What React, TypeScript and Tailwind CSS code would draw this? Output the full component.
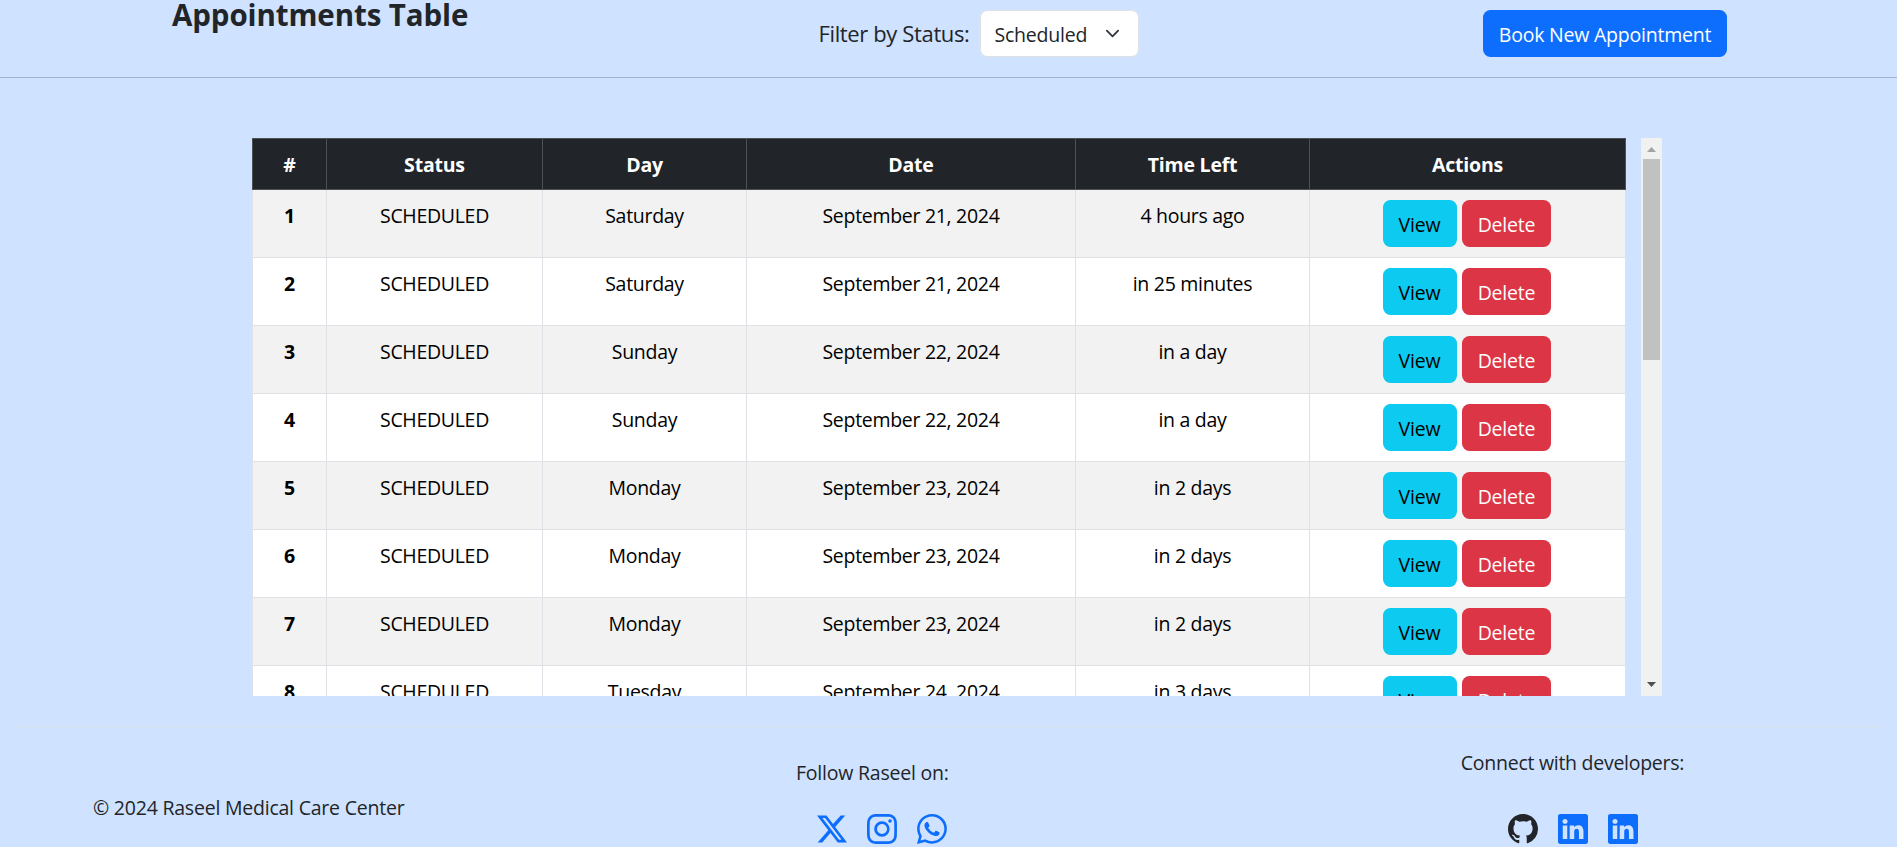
import type { ReactNode } from "react";
import { BsGithub, BsInstagram, BsLinkedin, BsTwitterX, BsWhatsapp } from "react-icons/bs";

type Appointment = { day: string; date: string; left: string };

const appointments: Appointment[] = [
  { day: "Saturday", date: "September 21, 2024", left: "4 hours ago" },
  { day: "Saturday", date: "September 21, 2024", left: "in 25 minutes" },
  { day: "Sunday", date: "September 22, 2024", left: "in a day" },
  { day: "Sunday", date: "September 22, 2024", left: "in a day" },
  { day: "Monday", date: "September 23, 2024", left: "in 2 days" },
  { day: "Monday", date: "September 23, 2024", left: "in 2 days" },
  { day: "Monday", date: "September 23, 2024", left: "in 2 days" },
  { day: "Tuesday", date: "September 24, 2024", left: "in 3 days" },
];

const headings = ["#", "Status", "Day", "Date", "Time Left", "Actions"];

function Header() {
  return (
    <header className="flex h-[78px] items-start justify-between border-b border-[#a0b0ce] pr-[170px] pl-[172px]">
      <h1 className="w-[300px] text-[29.5px] leading-[30px] font-bold tracking-[-0.1px] whitespace-nowrap">
        Appointments Table
      </h1>
      <div className="flex items-center pt-2.5 pl-0.5">
        <label className="text-[22px] leading-[33px] tracking-[-0.37px] whitespace-nowrap">
          Filter by Status:
        </label>
        <button className="ml-2.5 flex h-[47px] w-[159px] items-center rounded-[7.5px] border border-[#dee2e6] bg-white pl-[14px]">
          <span className="w-[92px] pt-0.5">Scheduled</span>
          <svg viewBox="0 0 16 16" className="ml-[18px] size-[15px]" fill="none" stroke="#343a40" strokeWidth="2" strokeLinecap="round" strokeLinejoin="round">
            <path d="m2 5 6 6 6-6" />
          </svg>
        </button>
      </div>
      <button className="mt-2.5 h-[47px] w-[244px] rounded-[7.5px] bg-[#0d6efd] pt-0.5 text-white">
        Book New Appointment
      </button>
    </header>
  );
}

function HeadCell({ children }: { children: ReactNode }) {
  return (
    <th className="h-[52px] border-t border-r border-b border-[#4d5154] bg-[#212529] p-0 pt-px font-bold tracking-[-0.2px] text-white first:border-l">
      {children}
    </th>
  );
}

function Cell({ children }: { children: ReactNode }) {
  return (
    <td className="h-[68px] border-r border-b border-[#dee2e6] p-0 pt-[11px] align-top first:border-l first:font-bold">
      {children}
    </td>
  );
}

function Table() {
  return (
    <table className="w-[1374px] shrink-0 table-fixed border-separate border-spacing-0 text-center tracking-[-0.3px] text-black">
      <colgroup>
        <col className="w-[75px]" />
        <col className="w-[216px]" />
        <col className="w-[204px]" />
        <col className="w-[329px]" />
        <col className="w-[234px]" />
        <col className="w-[316px]" />
      </colgroup>
      <thead>
        <tr>
          {headings.map((h) => (
            <HeadCell key={h}>{h}</HeadCell>
          ))}
        </tr>
      </thead>
      <tbody>
        {appointments.map((a, i) => (
          <tr key={i} className="bg-white odd:bg-[#f2f2f2]">
            <Cell>{i + 1}</Cell>
            <Cell>SCHEDULED</Cell>
            <Cell>{a.day}</Cell>
            <Cell>{a.date}</Cell>
            <Cell>{a.left}</Cell>
            <Cell>
              <div className="-mt-px flex justify-center gap-[5px] pr-0.5 tracking-[-0.2px]">
                <button className="h-[47px] w-[74px] rounded-[7.5px] bg-[#0dcaf0] pt-0.5">View</button>
                <button className="h-[47px] w-[89px] rounded-[7.5px] bg-[#dc3545] pt-0.5 pl-px text-white">Delete</button>
              </div>
            </Cell>
          </tr>
        ))}
      </tbody>
    </table>
  );
}

function Scrollbar() {
  return (
    <div className="flex h-full w-[21px] flex-col items-center bg-[#f1f1f1]">
      <svg viewBox="0 0 21 21" className="size-[21px] shrink-0">
        <path d="M6 14h9L10.5 9z" fill="#a3a3a3" />
      </svg>
      <div className="h-[201px] w-[17px] bg-[#c1c1c1]" />
      <svg viewBox="0 0 21 21" className="mt-auto size-[21px] shrink-0">
        <path d="M6 7h9l-4.5 5z" fill="#505050" />
      </svg>
    </div>
  );
}

function Footer() {
  return (
    <footer className="mr-[13px] ml-4 flex h-[121px] items-start border-t border-[#dee2e6] pl-[77px] whitespace-nowrap">
      <p className="w-[703px] pt-[66px]">© 2024 Raseel Medical Care Center</p>
      <div className="flex w-[151px] flex-col items-end pt-[31px]">
        <p className="w-full">Follow Raseel on:</p>
        <div className="mt-[26px] flex gap-5 text-[30px] text-[#0d6efd]">
          <BsTwitterX />
          <BsInstagram />
          <BsWhatsapp />
        </div>
      </div>
      <div className="ml-[513px] flex w-[225px] flex-col items-center pt-[21px]">
        <p className="tracking-[-0.27px]">Connect with developers:</p>
        <div className="mt-9 flex gap-5 text-[30px] text-[#0d6efd]">
          <BsGithub className="text-[#212529]" />
          <BsLinkedin />
          <BsLinkedin />
        </div>
      </div>
    </footer>
  );
}

export default function App() {
  return (
    <div className="flex h-[847px] w-full flex-col overflow-hidden bg-[#cfe2ff] font-['Open_Sans','Noto_Sans',sans-serif] text-[19.5px] leading-[30px] tracking-[-0.22px] text-[#212529]">
      <Header />
      <main className="h-[648px] pt-[60px] pl-[252px]">
        <div className="flex h-[558px] w-[1410px] items-start justify-between overflow-hidden">
          <Table />
          <Scrollbar />
        </div>
      </main>
      <Footer />
    </div>
  );
}
